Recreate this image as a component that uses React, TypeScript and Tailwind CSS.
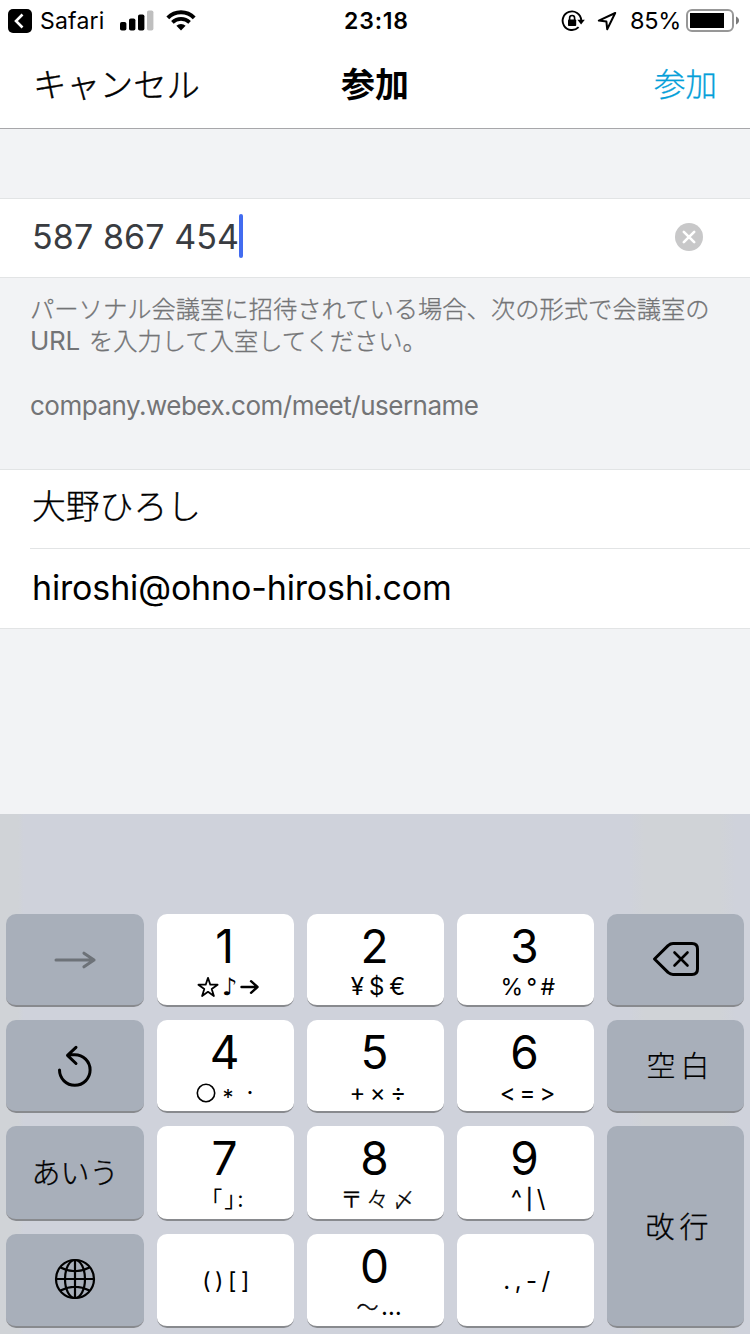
import React from 'react';

interface KeyProps {
  className?: string;
  dark?: boolean;
  children: React.ReactNode;
}

const Key: React.FC<KeyProps> = ({ className = '', dark = false, children }) => (
  <button
    className={`flex flex-col items-center rounded-[10px] border-b-2 border-[#888a8e] text-black ${dark ? 'justify-center bg-[#a8afba]' : 'bg-white'} ${className}`}
  >
    {children}
  </button>
);

const NumberKey: React.FC<{ digit: string; children: React.ReactNode }> = ({ digit, children }) => (
  <Key>
    <span className="mt-[10px] h-[44px] pr-[2px] text-[46px] leading-[44px]">{digit}</span>
    <span className="mt-[7px] flex h-[24px] items-center whitespace-pre text-[24px] leading-[24px]">{children}</span>
  </Key>
);

const StatusBar: React.FC = () => (
  <div className="grid h-10 grid-cols-3 items-center pt-[2px] pl-2 pr-[11px] text-[23px] leading-[38px]">
    <div className="flex items-center">
      <svg className="h-6 w-6" viewBox="0 0 24 24" fill="none">
        <rect width="24" height="24" rx="5" fill="#000" />
        <path d="M14.5 5.5L8 12l6.5 6.5" stroke="#fff" strokeWidth="2.6" />
      </svg>
      <span className="ml-[8px] w-[80px] tracking-[0.2px]">Safari</span>
      <svg className="mb-px h-[21px] w-[34px]" viewBox="0 0 34 21">
        <rect x="0" y="12" width="6.4" height="8.5" rx="1.8" />
        <rect x="9" y="8.5" width="6.4" height="12" rx="1.8" />
        <rect x="18" y="4.5" width="6.4" height="16" rx="1.8" />
        <rect x="27" y="0.5" width="6.4" height="20" rx="1.8" fill="#bfbfbf" />
      </svg>
      <svg className="mb-[2px] ml-3 h-[21px] w-[30px]" viewBox="0 0 30 21" fill="none">
        <path d="M1.8 7.8a18.6 18.6 0 0 1 26.4 0" stroke="#000" strokeWidth="4" />
        <path d="M6.4 12.4a12.2 12.2 0 0 1 17.2 0" stroke="#000" strokeWidth="3.6" />
        <path d="M15 20.4l-4.6-4.6a6.5 6.5 0 0 1 9.2 0z" fill="#000" />
      </svg>
    </div>
    <div className="pl-[6px] text-center font-semibold tracking-[0.8px]">23:18</div>
    <div className="flex items-center justify-end">
      <svg className="mb-px h-[22px] w-[24px]" viewBox="0 0 24 22" fill="none" stroke="#000">
        <path d="M20.2 10a9.3 9.3 0 1 0-2.6 7.2" strokeWidth="1.9" />
        <path d="M16.4 9.8h7.4l-3.7 4.6z" fill="#000" stroke="none" />
        <rect x="7" y="9.5" width="8.2" height="6.6" rx="0.8" fill="#000" stroke="none" />
        <path d="M8.6 10V8a2.5 2.5 0 0 1 5 0v2" strokeWidth="1.6" />
      </svg>
      <svg className="ml-3 h-5 w-5" viewBox="0 0 20 20" fill="none">
        <path d="M18.2 2L1.8 9.6l7.6 1 .8 7.6z" stroke="#000" strokeWidth="2" strokeLinejoin="round" />
      </svg>
      <span className="ml-[13px] w-[56px] text-[23.5px] tracking-[-0.3px]">85%</span>
      <svg className="h-[24px] w-[53px]" viewBox="0 0 53 24" fill="none">
        <rect x="1" y="1" width="46" height="21" rx="5" stroke="#979797" strokeWidth="2" />
        <rect x="4" y="4" width="34" height="15" fill="#000" />
        <path d="M50 7.5c2 1 3 2.4 3 4s-1 3-3 4z" fill="#7a7a7a" />
      </svg>
    </div>
  </div>
);

const Header: React.FC = () => (
  <header className="grid h-[89px] grid-cols-3 items-center border-b border-[#a7a7aa] bg-white px-[33px] text-[33.4px] leading-[88px]">
    <button className="h-[89px] text-left font-light [-webkit-text-stroke:0.4px]">キャンセル</button>
    <h1 className="text-center text-[34px] font-bold">参加</h1>
    <button className="h-[89px] text-right text-[31.5px] font-light text-[#049fd9] [-webkit-text-stroke:0.3px]">参加</button>
  </header>
);

const Keyboard: React.FC = () => (
  <div className="grid h-[520px] grid-cols-[138px_137px_137px_137px_137px] grid-rows-[93px_93px_95px_94px] gap-[13px] bg-[linear-gradient(90deg,#d0d3d7_0px,#d0d3d7_18px,#cfd2db_24px,#cfd2db_630px,#d0d3d7_644px,#d0d3d7_720px,#cfd2db_735px)] pl-[6px] pt-[100px]">
    <Key dark>
      <svg className="h-5 w-[42px]" viewBox="0 0 42 20" fill="none" stroke="#6d7278" strokeWidth="3" strokeLinecap="round" strokeLinejoin="round">
        <path d="M2 10h38M30 3.2l10 6.8-10 6.8" />
      </svg>
    </Key>
    <NumberKey digit="1">
      <svg className="mr-[3px] h-[22px] w-[22px]" viewBox="0 0 22 22" fill="none" stroke="#000" strokeWidth="1.8" strokeLinejoin="round">
        <path d="M11 1.8l2.3 6.9h7.3l-5.9 4.3 2.2 7-5.9-4.2L5.1 20l2.2-7-5.900-4.300h7.300z" />
      </svg>
      <span className="w-[14px] font-['DejaVu_Sans'] text-[24px]">♪</span>
      <svg className="ml-[4px] mr-[-5px] h-[16px] w-[19px]" viewBox="0 0 19 16" fill="none" stroke="#000" strokeWidth="2.4" strokeLinecap="round" strokeLinejoin="round">
        <path d="M1.5 8h16M11 2.2L17.5 8 11 13.8" />
      </svg>
    </NumberKey>
    <NumberKey digit="2"><span className="pl-[10px] tracking-[5px]">¥$€</span></NumberKey>
    <NumberKey digit="3"><span className="pl-[8px] text-[23px] tracking-[3.5px]">%°#</span></NumberKey>
    <Key dark>
      <svg className="mb-[2px] h-[36px] w-[48px]" viewBox="0 0 48 36" fill="none" stroke="#000" strokeWidth="3" strokeLinecap="round" strokeLinejoin="round">
        <path d="M2.5 18L16 4.6Q18.500 2.500 21 2.500h19q5.500 0 5.500 5.500v20q0 5.500-5.500 5.500H21q-2.500 0-5-2.100z" />
        <path d="M22.500 11.500l13 13M35.500 11.500l-13 13" strokeWidth="2.6" />
      </svg>
    </Key>

    <Key dark>
      <svg className="h-[42px] w-[36px]" viewBox="0 0 36 42" fill="none" stroke="#000" strokeWidth="3" strokeLinecap="round" strokeLinejoin="round">
        <path d="M2.5 25A15.3 15.3 0 1 0 17.8 9.7H12M19 2.3l-8.5 8L19 18.5" />
      </svg>
    </Key>
    <NumberKey digit="4">
      <svg className="h-[20px] w-[20px]" viewBox="0 0 20 20" fill="none">
        <circle cx="10" cy="10" r="8.7" stroke="#000" strokeWidth="1.6" />
      </svg>
      <span className="ml-[5px] w-[14px] pt-[7px] text-[22px]">*</span>
      <span className="ml-[10px] w-[10px]">·</span>
    </NumberKey>
    <NumberKey digit="5"><span className="pl-[9px] tracking-[4.5px]">+×÷</span></NumberKey>
    <NumberKey digit="6"><span className="pl-[8px] tracking-[4px]">&lt;=&gt;</span></NumberKey>
    <Key dark><span className="pl-[10px] pt-[3px] text-[29px] font-light tracking-[5px] [-webkit-text-stroke:0.2px]">空白</span></Key>

    <Key dark><span className="pt-[2px] text-[29px] font-light [-webkit-text-stroke:0.3px]">あいう</span></Key>
    <NumberKey digit="7"><span className="pl-[6px] text-[22px] tracking-[2px] [font-feature-settings:'halt']">「」:</span></NumberKey>
    <NumberKey digit="8"><span className="pl-[8px] text-[22px] font-light tracking-[4px] [-webkit-text-stroke:0.4px]">〒々〆</span></NumberKey>
    <NumberKey digit="9">
      <span className="pl-[8px] tracking-[4px]">^</span>
      <span className="text-[20px] tracking-[4px] [-webkit-text-stroke:0.5px]">|</span>
      <span className="tracking-[3px]">\</span>
    </NumberKey>
    <Key dark className="row-span-2"><span className="pl-[8px] pt-[4px] text-[29px] font-light tracking-[5px] [-webkit-text-stroke:0.3px]">改行</span></Key>

    <Key dark>
      <svg className="mb-[2px] h-[42px] w-[42px]" viewBox="0 0 42 42" fill="none" stroke="#000" strokeWidth="2.2">
        <circle cx="21" cy="21" r="19" />
        <ellipse cx="21" cy="21" rx="10" ry="19" />
        <path d="M21 2v38M2 21h38M6.5 9.5q14.5 7.5 29 0M6.5 32.5q14.5-7.5 29 0" />
      </svg>
    </Key>
    <Key className="justify-center"><span className="pl-[5px] pt-[2px] text-[23px] tracking-[4.5px]">()[]</span></Key>
    <NumberKey digit="0">
      <span className="ml-[4px] w-[27px] text-[22px] font-light [-webkit-text-stroke:0.4px]">～</span>
      <span className="w-[20px]">…</span>
    </NumberKey>
    <Key className="justify-center"><span className="pl-[7px] pt-px text-[24px] tracking-[4.5px]">.,-/</span></Key>
  </div>
);

const App: React.FC = () => (
  <div className="h-[1334px] w-[750px] overflow-hidden bg-[#f2f3f5] font-['Inter','Noto_Sans_CJK_JP',sans-serif] text-black">
    <div className="bg-white">
      <StatusBar />
      <Header />
    </div>

    <main className="h-[685px] pt-[69px]">
      <div className="flex h-[80px] items-center border-y border-[#e2e4e5] bg-white pb-[2px] pl-[32px] pr-[46px]">
        <span className="w-[207px] whitespace-nowrap text-[34px] leading-[44px] tracking-[0.1px] text-[#393c41]">587 867 454</span>
        <span className="mb-[2px] h-[44px] w-1 rounded-sm bg-[#426cf0]" />
        <svg className="ml-auto h-[30px] w-[30px]" viewBox="0 0 30 30">
          <circle cx="15" cy="15" r="14" fill="#c8c8c9" />
          <path d="M9.8 9.8l10.4 10.4M20.2 9.8L9.8 20.2" stroke="#fff" strokeWidth="2.6" strokeLinecap="round" />
        </svg>
      </div>

      <div className="h-[191px] whitespace-nowrap pl-[30px] pt-[15px] text-[24.3px] leading-8 text-[#737476]">
        <p className="font-light [-webkit-text-stroke:0.3px]">パーソナル会議室に招待されている場合、次の形式で会議室の</p>
        <p className="font-light [-webkit-text-stroke:0.3px]">
          <span className="mr-[2px] text-[26px] font-normal tracking-[-0.3px] [-webkit-text-stroke:0px]">URL </span>を入力して入室してください。
        </p>
        <p className="pt-[33px] text-[26px] tracking-[-0.5px]">company.webex.com/meet/username</p>
      </div>

      <div className="h-[160px] border-y border-[#e2e4e5] bg-white pl-[30px] text-[34px]">
        <div className="h-[79px] border-b border-[#e2e4e5] pl-[2px] text-[33.8px] font-light leading-[74px] [-webkit-text-stroke:0.3px]">大野ひろし</div>
        <div className="h-[79px] pl-[2px] leading-[77px] tracking-[-0.15px]">hiroshi@ohno-hiroshi.com</div>
      </div>
    </main>

    <Keyboard />
  </div>
);

export default App;
